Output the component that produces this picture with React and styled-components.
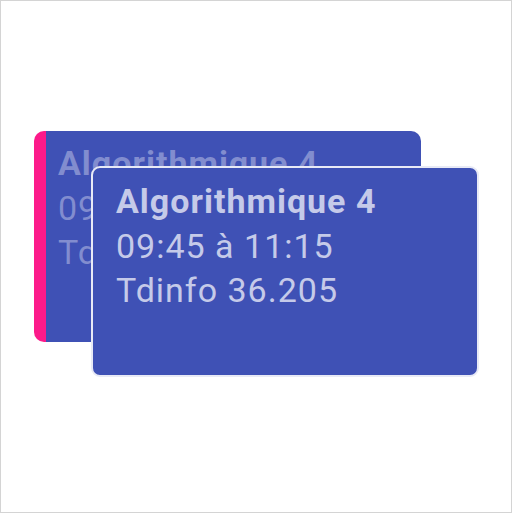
import React from 'react';
import styled, { createGlobalStyle } from 'styled-components';

const Global = createGlobalStyle`
  html, body {
    margin: 0;
    padding: 0;
    background: #ffffff;
  }
`;

const Frame = styled.div`
  width: 512px;
  height: 513px;
  box-sizing: border-box;
  border: 1px solid #d4d4d4;
  padding: 130px 0 0 33px;
  background: #ffffff;
`;

const Card = styled.div`
  position: relative;
  box-sizing: border-box;
  width: ${p => (p.ghost ? '388px' : '387px')};
  height: 211px;
  background: #3f51b5;
  border-radius: ${p => (p.ghost ? '9px' : '10px')};
  border-left: ${p => (p.ghost ? '2px solid #e8eaf6' : '12px solid #fc1a8a')};
  border-top: ${p => (p.ghost ? '2px solid #e8eaf6' : 'none')};
  border-right: ${p => (p.ghost ? '2px solid #e8eaf6' : 'none')};
  border-bottom: ${p => (p.ghost ? '2px solid #e8eaf6' : 'none')};
  padding: ${p => (p.ghost ? '11px 23px' : '10px 12px')};
  font-family: Roboto, 'Liberation Sans', sans-serif;
  font-size: 34px;
  line-height: 44.5px;
  letter-spacing: 1px;
  color: ${p => (p.ghost ? '#c5cae9' : 'rgba(197, 202, 233, 0.5)')};
`;

const Ghost = styled(Card)`
  position: absolute;
  left: 45px;
  top: 35px;
`;

const Title = styled.div`
  font-weight: 700;
  white-space: nowrap;
`;

const Line = styled.div`
  font-weight: 400;
  white-space: nowrap;
`;

const EventBody = () => (
  <>
    <Title>Algorithmique 4</Title>
    <Line>09:45 à 11:15</Line>
    <Line>Tdinfo 36.205</Line>
  </>
);

export default function App() {
  return (
    <Frame>
      <Global />
      <Card>
        <EventBody />
        <Ghost ghost>
          <EventBody />
        </Ghost>
      </Card>
    </Frame>
  );
}
